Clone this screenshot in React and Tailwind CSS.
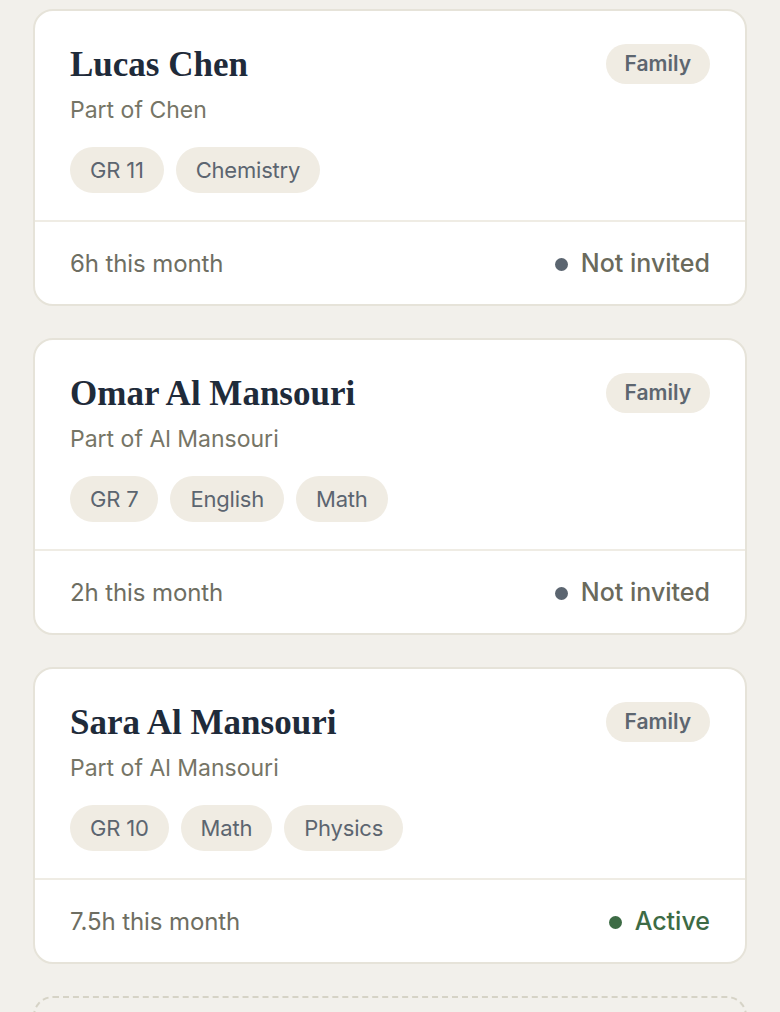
import React from "react";

const people = [
  { name: "Lucas Chen", family: "Chen", tags: ["GR 11", "Chemistry"], hours: "6h this month", status: "Not invited" },
  { name: "Omar Al Mansouri", family: "Al Mansouri", tags: ["GR 7", "English", "Math"], hours: "2h this month", status: "Not invited" },
  { name: "Sara Al Mansouri", family: "Al Mansouri", tags: ["GR 10", "Math", "Physics"], hours: "7.5h this month", status: "Active" },
];

const sans = { fontFamily: "Inter, 'Noto Sans', sans-serif" };

function Card({ p }) {
  const active = p.status === "Active";
  return (
    <div className="rounded-[20px] border-2 border-[#e6e3d9] bg-white">
      <div className="px-[35px] pt-[34px] pb-[27px]">
        <div className="flex items-start justify-between">
          <div
            className="text-[35px] leading-[40px] font-bold text-[#1f2b3a]"
            style={{ fontFamily: "'Liberation Serif', serif" }}
          >
            {p.name}
          </div>
          <div className="h-[40px] px-[19px] -mt-px rounded-full bg-[#f0ece3] flex items-center text-[21px] font-semibold text-[#5d6670]" style={sans}>
            Family
          </div>
        </div>
        <div className="mt-[10px] text-[23px] leading-[30px] text-[#767566]" style={sans}>
          Part of {p.family}
        </div>
        <div className="mt-[22px] flex gap-[12px]">
          {p.tags.map((t) => (
            <div key={t} className="h-[46px] px-[20px] rounded-full bg-[#f0ece3] flex items-center text-[22px] tracking-[-0.2px] text-[#5c6570]" style={sans}>
              {t}
            </div>
          ))}
        </div>
      </div>
      <div className="border-t-2 border-[#efece4] h-[84px] pt-[2px] px-[35px] flex items-center justify-between" style={sans}>
        <div className="text-[24px] text-[#6e6e62] tracking-[-0.1px]">{p.hours}</div>
        <div className={`flex items-center gap-[13px] text-[25px] font-medium ${active ? "text-[#3d6b45]" : "text-[#6a6a5c]"}`}>
          <span className={`w-[13px] h-[13px] rounded-full ${active ? "bg-[#3d6b45]" : "bg-[#5b6570]"}`}></span>
          {p.status}
        </div>
      </div>
    </div>
  );
}

export default function App() {
  return (
    <div className="bg-[#f2f0eb] px-[33px] pt-[9px] overflow-hidden h-[1012px]">
      <div className="flex flex-col gap-[32px]">
        {people.map((p) => (
          <Card key={p.name} p={p} />
        ))}
        <div className="h-[120px] shrink-0 rounded-[20px] border-2 border-dashed border-[#d6d3c6]"></div>
      </div>
    </div>
  );
}
